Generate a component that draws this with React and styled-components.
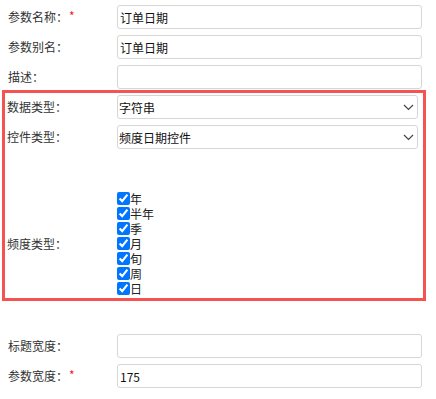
import React from 'react';
import styled, { createGlobalStyle } from 'styled-components';

const GlobalStyle = createGlobalStyle`
  html, body {
    margin: 0;
    padding: 0;
    background: #fff;
  }
  body {
    font-family: "Noto Sans CJK SC", "Liberation Sans", sans-serif;
    font-size: 12px;
    color: #333;
  }
`;

const Form = styled.div`
  width: 436px;
  padding-top: 5px;
  display: flex;
  flex-direction: column;
`;

const Row = styled.div`
  display: grid;
  grid-template-columns: ${(p) => (p.inBox ? '110px 301px' : '109px 305px')};
  padding-left: ${(p) => (p.inBox ? '2px' : '8px')};
  align-items: center;
  min-height: 24px;
  margin-top: ${(p) => p.gap || 0}px;
`;

const Label = styled.div`
  display: flex;
  align-items: center;
  font-size: 12px;
  color: #333;
  line-height: 16px;
  white-space: nowrap;
`;

const Required = styled.span`
  color: #f01b1b;
  margin-left: 1px;
  font-size: 12px;
  position: relative;
  top: -1px;
`;

const TextInput = styled.input`
  box-sizing: border-box;
  width: 100%;
  height: 24px;
  border: 1px solid #d6d6d6;
  border-radius: 3px;
  padding: 0 2px;
  font-family: "Noto Sans CJK SC", "Liberation Sans", sans-serif;
  font-size: 12px;
  color: #111;
  background: #fff;
  outline: none;
`;

const Highlight = styled.section`
  box-sizing: border-box;
  margin: 1px 0 0 2px;
  width: 424px;
  border: 3px solid #f55252;
  padding: 2px 0 2px;
  display: flex;
  flex-direction: column;
`;

const SelectWrap = styled.div`
  position: relative;
  height: 24px;
`;

const Select = styled.select`
  box-sizing: border-box;
  appearance: none;
  width: 100%;
  height: 24px;
  border: 1px solid #d6d6d6;
  border-radius: 3px;
  padding: 0 1px;
  font-family: "Noto Sans CJK SC", "Liberation Sans", sans-serif;
  font-size: 12px;
  color: #111;
  background: #fff;
  outline: none;
`;

const Chevron = styled.svg`
  position: absolute;
  right: 4px;
  top: 9px;
  pointer-events: none;
`;

const CheckList = styled.div`
  display: flex;
  flex-direction: column;
`;

const CheckItem = styled.label`
  display: flex;
  align-items: center;
  height: 15px;
  line-height: 15px;
  font-size: 12px;
  color: #222;
  overflow: hidden;
`;

const Check = styled.input`
  width: 13px;
  height: 13px;
  margin: 0;
  accent-color: #0075ff;
`;

const freqs = ['年', '半年', '季', '月', '旬', '周', '日'];

const Dropdown = ({ value }) => (
  <SelectWrap>
    <Select defaultValue={value}>
      <option>{value}</option>
    </Select>
    <Chevron width="11" height="7" viewBox="0 0 11 7">
      <path d="M1 1l4.5 4.5L10 1" fill="none" stroke="#444" strokeWidth="1.2" />
    </Chevron>
  </SelectWrap>
);

export default function App() {
  return (
    <>
      <GlobalStyle />
      <Form>
        <Row>
          <Label>参数名称：<Required>*</Required></Label>
          <TextInput defaultValue="订单日期" />
        </Row>
        <Row gap={6}>
          <Label>参数别名：</Label>
          <TextInput defaultValue="订单日期" />
        </Row>
        <Row gap={6}>
          <Label>描述：</Label>
          <TextInput />
        </Row>
        <Highlight>
          <Row inBox>
            <Label>数据类型：</Label>
            <Dropdown value="字符串" />
          </Row>
          <Row inBox gap={6}>
            <Label>控件类型：</Label>
            <Dropdown value="频度日期控件" />
          </Row>
          <Row inBox gap={42}>
            <Label>频度类型：</Label>
            <CheckList>
              {freqs.map((f) => (
                <CheckItem key={f}>
                  <Check type="checkbox" defaultChecked />
                  {f}
                </CheckItem>
              ))}
            </CheckList>
          </Row>
        </Highlight>
        <Row gap={33}>
          <Label>标题宽度：</Label>
          <TextInput />
        </Row>
        <Row gap={6}>
          <Label>参数宽度：<Required>*</Required></Label>
          <TextInput defaultValue="175" />
        </Row>
      </Form>
    </>
  );
}
